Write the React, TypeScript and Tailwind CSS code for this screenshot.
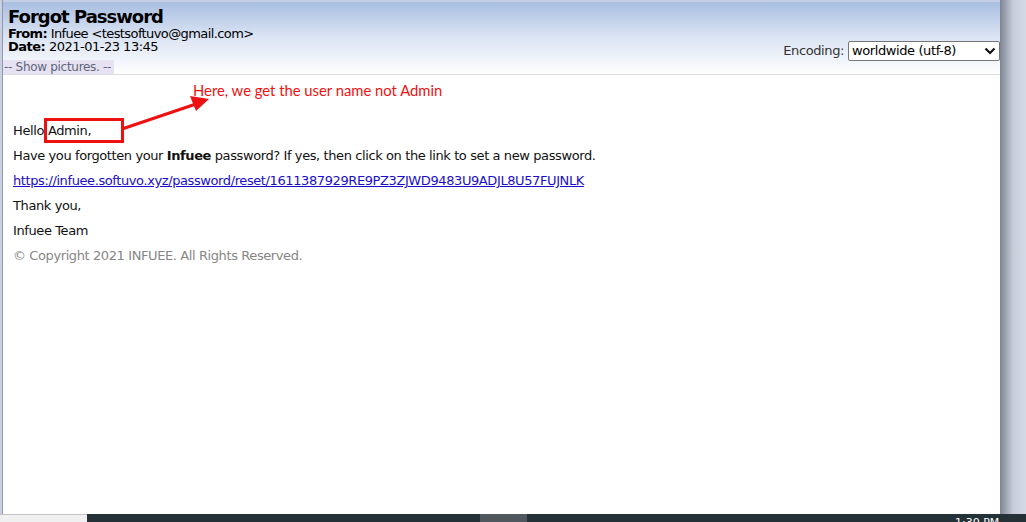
import React from "react";

const ui = { fontFamily: '"DejaVu Sans", Verdana, sans-serif' };

function Chevron() {
  return (
    <svg width="12" height="8" viewBox="0 0 12 8" className="shrink-0">
      <path d="M1.5 1.5 L6 6 L10.5 1.5" fill="none" stroke="#111" strokeWidth="2.2" />
    </svg>
  );
}

// arrow drawn over the mail body, coords relative to the panel
function Annotation() {
  return (
    <svg
      className="pointer-events-none absolute left-0 top-0"
      width="998"
      height="200"
      viewBox="0 0 998 200"
    >
      <line x1="119" y1="129" x2="193" y2="104" stroke="#ee1111" strokeWidth="3" />
      <polygon points="206,99 187,96 193,111" fill="#ee1111" />
    </svg>
  );
}

export default function App() {
  return (
    <div className="relative flex h-[522px] w-[1026px] flex-col overflow-hidden bg-[#d5dce8]" style={ui}>
      <div className="flex h-[514px]">
        <div className="w-[2px] bg-[#c9d1e0]" />
        <div className="relative flex w-[998px] flex-col border-l border-[#8e99b3] bg-white">
          {/* header */}
          <div className="flex h-[75px] flex-col border-b border-[#dcdcdc] bg-gradient-to-b from-[#a6bce0] via-[#dbe4f3] to-white">
            <div className="h-[2px] bg-[#c3d0e6]" />
            <div className="flex flex-1 items-start justify-between">
              <div className="flex flex-col pl-[5px] text-[13px] leading-[13px] text-black">
                <div className="pt-[5px] text-[18px] font-bold leading-[20px] tracking-[-1px]">Forgot Password</div>
                <div className="tracking-[-0.6px]">
                  <b>From:</b> Infuee &lt;testsoftuvo@gmail.com&gt;
                </div>
                <div className="tracking-[-0.5px]">
                  <b>Date:</b> 2021-01-23 13:45
                </div>
                <div className="-ml-[5px] mt-[7px] w-[111px] bg-[#e6e2f4] pl-[1px] text-[12px] leading-[14px] tracking-[-0.3px] text-[#5f6678]">
                  -- Show pictures. --
                </div>
              </div>
              <div className="flex items-center gap-[4px] pr-0 pt-[39px] text-[13px]">
                <span className="tracking-[-0.4px] text-[#333]">Encoding:</span>
                <div className="flex h-[20px] w-[152px] items-center justify-between rounded-[2px] border border-[#767676] bg-white pl-[3px] pr-[3px] tracking-[-0.4px] text-black">
                  <span>worldwide (utf-8)</span>
                  <Chevron />
                </div>
              </div>
            </div>
          </div>

          {/* body */}
          <div className="flex flex-1 flex-col pl-[10px] text-[13px] leading-[25px] tracking-[-0.4px] text-[#111]">
            <div
              className="ml-[180px] mt-[3px] h-[25px] text-[14.8px] tracking-[0px] text-[#ee1111]"
              style={{ fontFamily: 'Lato, "Open Sans", sans-serif' }}
            >
              Here, we get the user name not Admin
            </div>
            <div className="mt-[15px] flex">
              <span>Hello</span>
              <span className="relative ml-[4px]">
                Admin,
                <span className="absolute -left-[4px] top-[0px] h-[25px] w-[80px] border-[3px] border-[#ee1111]" />
              </span>
            </div>
            <div>
              Have you forgotten your <b>Infuee</b> password? If yes, then click on the link to set a new password.
            </div>
            <div>
              <a className="text-[#1a0dcc] underline" href="#">
                https://infuee.softuvo.xyz/password/reset/1611387929RE9PZ3ZJWD9483U9ADJL8U57FUJNLK
              </a>
            </div>
            <div>Thank you,</div>
            <div>Infuee Team</div>
            <div className="text-[#868686]">© Copyright 2021 INFUEE. All Rights Reserved.</div>
          </div>
          <Annotation />
        </div>
        <div className="w-[26px] bg-gradient-to-r from-[#7f8593] via-[#c6cdd9] to-[#d5dce8]" />
      </div>

      {/* taskbar strip */}
      <div className="flex h-[8px]">
        <div className="w-[87px] border-t border-[#c4c4c4] bg-[#f0f0f0]" />
        <div className="relative flex flex-1 bg-[#243238]">
          <div className="ml-[393px] w-[47px] bg-[#50585e]" />
          <span className="absolute left-[868px] top-[3px] text-[11px] leading-[12px] text-white">1:30 PM</span>
        </div>
      </div>
    </div>
  );
}
